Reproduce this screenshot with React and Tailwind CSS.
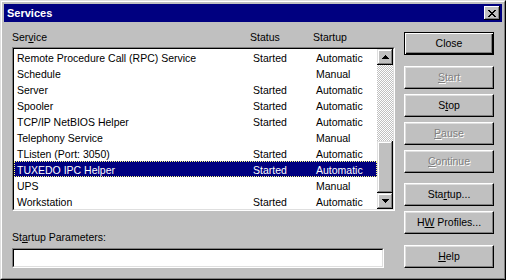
import React from "react";

const rows = [
  ["Remote Procedure Call (RPC) Service", "Started", "Automatic"],
  ["Schedule", "", "Manual"],
  ["Server", "Started", "Automatic"],
  ["Spooler", "Started", "Automatic"],
  ["TCP/IP NetBIOS Helper", "Started", "Automatic"],
  ["Telephony Service", "", "Manual"],
  ["TListen (Port: 3050)", "Started", "Automatic"],
  ["TUXEDO IPC Helper", "Started", "Automatic"],
  ["UPS", "", "Manual"],
  ["Workstation", "Started", "Automatic"],
];

const SELECTED = 7;

// pixel-ish arrow glyph for the scroll buttons
function Arrow({ down }) {
  const r = [
    [3, 1],
    [2, 3],
    [1, 5],
    [0, 7],
  ];
  const list = down ? [...r].reverse() : r;
  return (
    <svg width="7" height="4" viewBox="0 0 7 4" shapeRendering="crispEdges">
      {list.map(([x, w], i) => (
        <rect key={i} x={x} y={i} width={w} height="1" fill="#000" />
      ))}
    </svg>
  );
}

function CloseGlyph() {
  const px = [
    [0, 0], [1, 0], [6, 0], [7, 0],
    [1, 1], [2, 1], [5, 1], [6, 1],
    [2, 2], [3, 2], [4, 2], [5, 2],
    [3, 3], [4, 3],
    [2, 4], [3, 4], [4, 4], [5, 4],
    [1, 5], [2, 5], [5, 5], [6, 5],
    [0, 6], [1, 6], [6, 6], [7, 6],
  ];
  return (
    <svg width="8" height="7" viewBox="0 0 8 7" shapeRendering="crispEdges">
      {px.map(([x, y], i) => (
        <rect key={i} x={x} y={y} width="1" height="1" fill="#000" />
      ))}
    </svg>
  );
}

function Btn({ children, disabled, isDefault, className = "" }) {
  if (isDefault) {
    return (
      <div className={`h-[23px] w-[90px] border border-black ${className}`}>
        <div className="flex h-full w-full items-center justify-center bg-[#c0c0c0] shadow-[inset_1px_1px_#fff,inset_-1px_-1px_#000,inset_-2px_-2px_#808080]">
          <span className="whitespace-pre">{children}</span>
        </div>
      </div>
    );
  }
  return (
    <div
      className={`flex h-[23px] w-[90px] items-center justify-center border border-t-white border-l-white border-b-black border-r-black bg-[#c0c0c0] shadow-[inset_-1px_-1px_#808080,inset_1px_1px_#dfdfdf] ${
        disabled ? "text-[#808080] [text-shadow:1px_1px_0_#fff]" : "text-black"
      } ${className}`}
    >
      <span className="whitespace-pre">{children}</span>
    </div>
  );
}

function ScrollBtn({ down }) {
  return (
    <div className="flex h-[16px] w-[16px] items-center justify-center bg-[#c0c0c0] shadow-[inset_-1px_-1px_#000,inset_1px_1px_#dfdfdf,inset_-2px_-2px_#808080,inset_2px_2px_#fff]">
      <Arrow down={down} />
    </div>
  );
}

export default function App() {
  return (
    <div className="h-[280px] w-[506px] border border-t-[#dfdfdf] border-l-[#dfdfdf] border-b-black border-r-black bg-[#c0c0c0] font-['Liberation_Sans',Arial,sans-serif] text-[10.5px] text-black">
      <div className="flex h-full flex-col border border-t-white border-l-white border-b-[#808080] border-r-[#808080] p-[2px]">
        {/* title bar */}
        <div className="flex h-[18px] items-center justify-between bg-[#000080] pl-[3px] pr-[2px]">
          <span className="text-[11px] font-bold leading-[18px] text-white">Services</span>
          <div className="flex h-[14px] w-[16px] items-center justify-center bg-[#c0c0c0] shadow-[inset_-1px_-1px_#000,inset_1px_1px_#fff,inset_-2px_-2px_#808080]">
            <CloseGlyph />
          </div>
        </div>

        <div className="flex pl-[8px]">
          {/* left side */}
          <div className="flex w-[383px] flex-col">
            <div className="flex h-[25px] pt-[9px] leading-[13px]">
              <span className="w-[238px]">
                Ser<u>v</u>ice
              </span>
              <span className="w-[63px]">Status</span>
              <span>Startup</span>
            </div>

            <div className="h-[164px] border border-t-[#808080] border-l-[#808080] border-b-white border-r-white">
              <div className="flex h-full border border-t-black border-l-black border-b-[#dfdfdf] border-r-[#dfdfdf] bg-white">
                <div className="w-[363px]">
                  {rows.map((r, i) => (
                    <div
                      key={i}
                      className={`flex h-[16px] pl-[3px] pt-[3px] leading-[13px] whitespace-nowrap ${
                        i === SELECTED
                          ? "bg-[#000080] text-white outline-1 outline-dotted -outline-offset-1 outline-[#ffff80]"
                          : ""
                      }`}
                    >
                      <span className="w-[236px]">{r[0]}</span>
                      <span className="w-[63px]">{r[1]}</span>
                      <span>{r[2]}</span>
                    </div>
                  ))}
                </div>
                <div className="flex w-[16px] flex-col">
                  <ScrollBtn />
                  <div className="flex flex-1 flex-col justify-end bg-[repeating-conic-gradient(#c0c0c0_0%_25%,#ffffff_0%_50%)] bg-[length:2px_2px]">
                    <div className="h-[52px] bg-[#c0c0c0] shadow-[inset_-1px_-1px_#000,inset_1px_1px_#dfdfdf,inset_-2px_-2px_#808080,inset_2px_2px_#fff]" />
                  </div>
                  <ScrollBtn down />
                </div>
              </div>
            </div>

            <div className="mt-[20px] leading-[13px]">
              St<u>a</u>rtup Parameters:
            </div>
            <div className="mt-[4px] h-[20px] w-[372px] border border-t-[#808080] border-l-[#808080] border-b-white border-r-white">
              <div className="h-full border border-t-black border-l-black border-b-[#dfdfdf] border-r-[#dfdfdf] bg-white" />
            </div>
          </div>

          {/* right side buttons */}
          <div className="ml-[9px] flex w-[90px] flex-col">
            <Btn isDefault className="mt-[10px]">Close</Btn>
            <Btn disabled className="mt-[11px]">
              <u>S</u>tart
            </Btn>
            <Btn className="mt-[5px]">
              S<u>t</u>op
            </Btn>
            <Btn disabled className="mt-[5px]">
              <u>P</u>ause
            </Btn>
            <Btn disabled className="mt-[5px]">
              <u>C</u>ontinue
            </Btn>
            <Btn className="mt-[10px]">
              Sta<u>r</u>tup...
            </Btn>
            <Btn className="mt-[5px]">
              H<u>W</u> Profiles...
            </Btn>
            <Btn className="mt-[11px]">
              <u>H</u>elp
            </Btn>
          </div>
        </div>
      </div>
    </div>
  );
}
